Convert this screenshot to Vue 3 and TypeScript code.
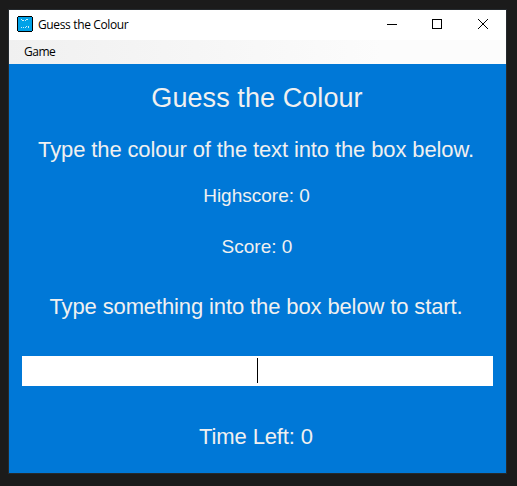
<script setup lang="ts">
import { ref } from 'vue'

const guess = ref<string>('')
const highscore = ref<number>(0)
const score = ref<number>(0)
const timeLeft = ref<number>(0)
</script>

<template>
  <div class="desktop">
    <main class="window">
      <header class="titlebar">
        <svg class="app-icon" width="16" height="16" viewBox="0 0 16 16" shape-rendering="crispEdges">
          <path fill="#000" d="M1 0h14v1h1v14h-1v1H1v-1H0V1h1z" />
          <path fill="#00a2e8" d="M1 1h14v14H1z" />
          <path fill="#c9edfb" d="M4 3h1v1H4zM5 4h2v1H5zM8 4h1v1H8zM9 3h2v1H9zM4 11h1v1H4zM6 11h1v1H6zM8 11h1v1H8zM9 10h1v1H9zM11 10h1v2h-1z" />
        </svg>
        <span class="caption">Guess the Colour</span>
        <div class="controls">
          <svg width="46" height="30" viewBox="0 0 46 30" shape-rendering="crispEdges"><path d="M18 14h10v1H18z" /></svg>
          <svg width="46" height="30" viewBox="0 0 46 30" shape-rendering="crispEdges"><path fill-rule="evenodd" d="M17 9h10v10H17zM18 10v8h8v-8z" /></svg>
          <svg width="45" height="30" viewBox="0 0 45 30"><path class="cross" d="M17 9l10 10M27 9L17 19" /></svg>
        </div>
      </header>
      <nav class="menu"><span>Game</span></nav>
      <section class="game">
        <h1 class="title">Guess the Colour</h1>
        <p class="line hint">Type the colour of the text into the box below.</p>
        <p class="line highscore">Highscore: {{ highscore }}</p>
        <p class="line score">Score: {{ score }}</p>
        <p class="line prompt">Type something into the box below to start.</p>
        <div class="entry"><span>{{ guess }}</span><i class="caret"></i></div>
        <p class="line time">Time Left: {{ timeLeft }}</p>
      </section>
    </main>
  </div>
</template>

<style>
body { background: #1b1b1b; }
</style>

<style scoped>
.desktop { box-sizing: border-box; width: 517px; height: 486px; padding: 10px 11px 13px 9px; background: #1b1b1b; overflow: hidden; }
.window { display: flex; flex-direction: column; height: 463px; box-shadow: 0 0 0 1px #252a2e; }
.titlebar { display: flex; align-items: center; flex: 0 0 30px; padding-left: 8px; background: #fff; }
.app-icon { flex: none; margin-top: -2px; }
.caption { margin-left: 5px; font: 12px/28px "Open Sans", sans-serif; letter-spacing: -0.36px; color: #000; white-space: nowrap; }
.controls { display: flex; margin-left: auto; }
.cross { fill: none; stroke: #000; stroke-width: 1; }
.menu { flex: 0 0 24px; padding-left: 15px; background: linear-gradient(90deg, #f0f0f0, #fcfcfc 75%); font: 12px/24px "Open Sans", sans-serif; letter-spacing: -0.5px; color: #000; }
.game { display: flex; flex: 1; flex-direction: column; align-items: center; padding-right: 1px; background: #0078d7; color: #f0f0f0; font-family: "Liberation Sans", Arial, sans-serif; }
.title { margin: 18px 0 0; font-size: 27px; font-weight: 400; line-height: 32px; letter-spacing: 0.08px; }
.line { margin: 0; padding-right: 2px; white-space: nowrap; }
.hint, .prompt, .time { font-size: 22px; line-height: 26px; letter-spacing: -0.12px; }
.hint { margin-top: 23px; }
.highscore, .score { font-size: 19px; line-height: 22px; }
.highscore { margin-top: 22px; padding-right: 1px; }
.score { margin-top: 29px; padding-right: 0; }
.prompt { margin-top: 36px; }
.entry { display: flex; align-items: flex-start; justify-content: center; align-self: stretch; box-sizing: border-box; height: 30px; margin: 36px 12px 0 13px; padding-top: 2px; background: #fff; color: #000; font-size: 21.33px; }
.caret { width: 1px; height: 25px; background: #000; }
.time { margin-top: 38px; }
</style>
